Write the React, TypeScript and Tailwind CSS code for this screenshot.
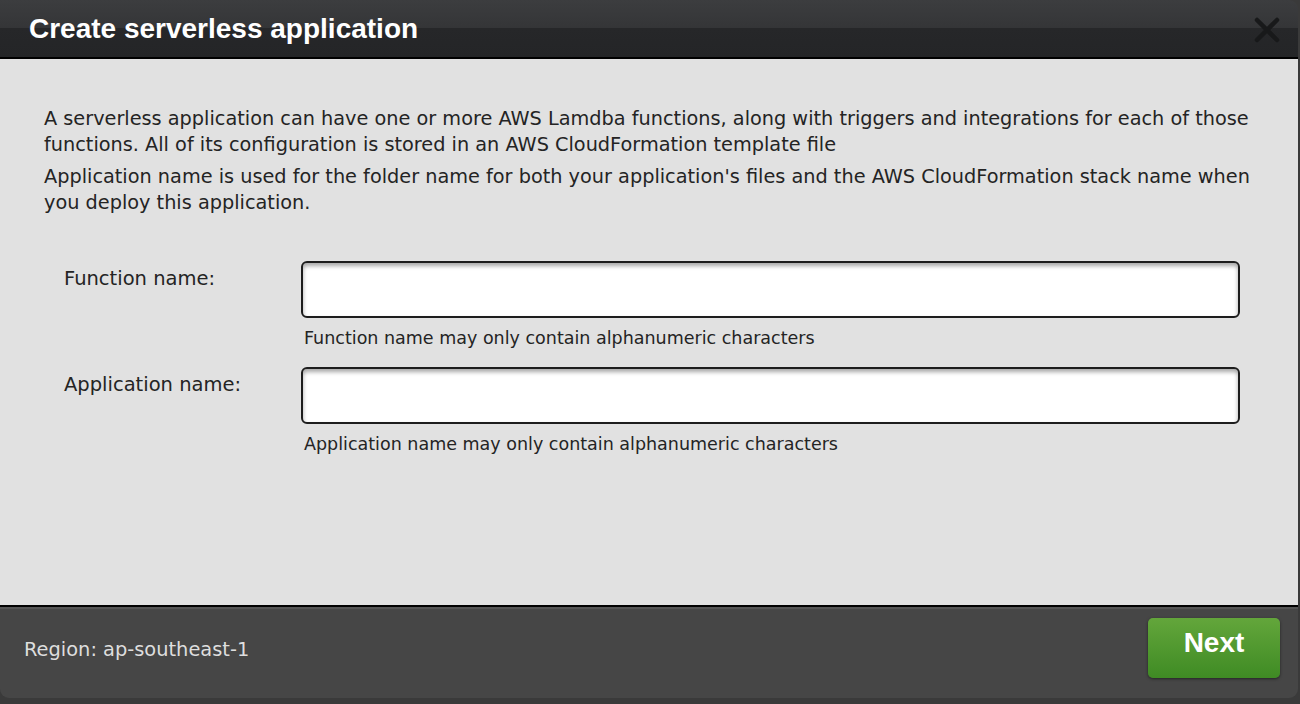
export default function App() {
  return (
    <div className="h-[704px] w-[1300px] overflow-hidden bg-[#3a3a3a] font-['DejaVu_Sans',sans-serif]">
      <div className="flex h-[698px] w-[1298px] flex-col overflow-hidden rounded-b-[9px] rounded-tr-[9px]">
        {/* header */}
        <div className="relative flex h-[59px] shrink-0 items-center border-b-2 border-black bg-[linear-gradient(#3c3d3f_0%,#343537_50%,#262729_50%,#242527_100%)] pl-[29px]">
          <h1 className="font-['Liberation_Sans',Arial,sans-serif] text-[28px] font-bold text-white">
            Create serverless application
          </h1>
          <svg className="absolute right-[18px] top-[17px]" width="26" height="26" viewBox="0 0 26 26">
            <path d="M3 3L23 23M23 3L3 23" stroke="#18191a" strokeWidth="4.5" strokeLinecap="round" />
          </svg>
        </div>

        {/* body */}
        <div className="flex-1 bg-[#e1e1e1] pl-[44px] pr-[40px] pt-[47px] text-[#242424]">
          <p className="text-[19.3px] leading-[26px]">
            A serverless application can have one or more AWS Lamdba functions, along with triggers and integrations for each of those
            functions. All of its configuration is stored in an AWS CloudFormation template file
          </p>
          <p className="mt-[6px] text-[19.3px] leading-[26px]">
            Application name is used for the folder name for both your application's files and the AWS CloudFormation stack name when
            you deploy this application.
          </p>

          <div className="mt-[45px] flex flex-col gap-[17px] pl-[20px]">
            <div className="flex">
              <label className="w-[237px] shrink-0 pt-[5px] text-[19.5px] leading-[26px]">Function name:</label>
              <div className="flex flex-col">
                <input className="h-[57px] w-[939px] rounded-[6px] border-2 border-[#1d1d1d] bg-white px-3 shadow-[inset_0_3px_4px_rgba(0,0,0,0.35)] outline-none" />
                <span className="mt-[8px] pl-[3px] text-[17.5px] leading-[24px]">Function name may only contain alphanumeric characters</span>
              </div>
            </div>
            <div className="flex">
              <label className="w-[237px] shrink-0 pt-[5px] text-[19.5px] leading-[26px]">Application name:</label>
              <div className="flex flex-col">
                <input className="h-[57px] w-[939px] rounded-[6px] border-2 border-[#1d1d1d] bg-white px-3 shadow-[inset_0_3px_4px_rgba(0,0,0,0.35)] outline-none" />
                <span className="mt-[8px] pl-[3px] text-[17.5px] leading-[24px]">Application name may only contain alphanumeric characters</span>
              </div>
            </div>
          </div>
        </div>

        {/* footer */}
        <div className="flex h-[93px] shrink-0 items-center justify-between border-t-2 border-black bg-[#464646] pb-[6px] pl-[24px] pr-[18px] shadow-[inset_0_2px_0_#555]">
          <span className="text-[19.4px] text-[#dedede]">Region: ap-southeast-1</span>
          <button className="mt-[-4px] h-[60px] w-[132px] rounded-[5px] bg-[linear-gradient(#63a63b,#3f8b24)] pb-[10px] font-['Liberation_Sans',Arial,sans-serif] text-[28px] font-bold text-white shadow-[0_1px_3px_rgba(0,0,0,0.5)]">
            Next
          </button>
        </div>
      </div>
    </div>
  );
}
